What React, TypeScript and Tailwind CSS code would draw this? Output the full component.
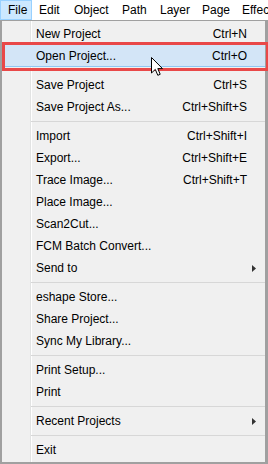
import React from 'react';

type Item = { label: string; shortcut?: string; submenu?: boolean; active?: boolean } | 'sep';

const items: Item[] = [
  { label: 'New Project', shortcut: 'Ctrl+N' },
  { label: 'Open Project...', shortcut: 'Ctrl+O', active: true },
  'sep',
  { label: 'Save Project', shortcut: 'Ctrl+S' },
  { label: 'Save Project As...', shortcut: 'Ctrl+Shift+S' },
  'sep',
  { label: 'Import', shortcut: 'Ctrl+Shift+I' },
  { label: 'Export...', shortcut: 'Ctrl+Shift+E' },
  { label: 'Trace Image...', shortcut: 'Ctrl+Shift+T' },
  { label: 'Place Image...' },
  { label: 'Scan2Cut...' },
  { label: 'FCM Batch Convert...' },
  { label: 'Send to', submenu: true },
  'sep',
  { label: 'eshape Store...' },
  { label: 'Share Project...' },
  { label: 'Sync My Library...' },
  'sep',
  { label: 'Print Setup...' },
  { label: 'Print' },
  'sep',
  { label: 'Recent Projects', submenu: true },
  'sep',
  { label: 'Exit' },
];

const bar = [
  { name: 'File', w: 'w-[32px]', on: true },
  { name: 'Edit', w: 'w-[35px]' },
  { name: 'Object', w: 'w-[48px]' },
  { name: 'Path', w: 'w-[38px]' },
  { name: 'Layer', w: 'w-[42px]' },
  { name: 'Page', w: 'w-[40px]' },
  { name: 'Effects', w: 'w-[60px]' },
];

const App: React.FC = () => {
  return (
    <div className="relative w-[268px] h-[464px] overflow-hidden bg-white font-['Liberation_Sans',Arial,sans-serif] text-[12px] text-black">
      {/* menu bar */}
      <div className="flex h-[20px] bg-white whitespace-nowrap">
        {bar.map(b => (
          <div
            key={b.name}
            className={`${b.w} shrink-0 h-[20px] flex items-center pl-[7px] ${b.on ? 'bg-[#cce8ff] border border-[#99d1ff] pl-[6px]' : ''}`}
          >
            {b.name}
          </div>
        ))}
      </div>

      {/* dropdown */}
      <div className="border-t border-t-[#a0a0a0] border-l-2 border-l-[#a0a0a0] border-r-[3px] border-r-[#a0a0a0] border-b-2 border-b-[#a0a0a0] bg-[linear-gradient(to_right,#f0f0f0_28px,#e2e3e3_28px,#e2e3e3_29px,#ffffff_29px,#ffffff_30px,#f0f0f0_30px)] pt-[2px] pb-px">
        {items.map((it, i) =>
          it === 'sep' ? (
            <div key={i} className="h-[7px] flex flex-col justify-center pl-[29px]">
              <div className="h-px bg-[#d7d7d7]" />
            </div>
          ) : (
            <div
              key={i}
              className={`h-[22px] flex items-center pl-[34px] whitespace-nowrap ${it.active ? 'bg-[#d3e5f7] border-b border-b-[#90c6f2]' : ''}`}
            >
              <span className="flex-1">{it.label}</span>
              {it.shortcut && <span>{it.shortcut}</span>}
              <span className="w-[18px] flex items-center pl-[5px]">
                {it.submenu && (
                  <svg width="4" height="7" viewBox="0 0 4 7">
                    <path d="M0 0 L4 3.5 L0 7 Z" fill="#333" />
                  </svg>
                )}
              </span>
            </div>
          )
        )}
      </div>

      {/* red annotation box */}
      <div className="absolute left-[2px] top-[42px] w-[267px] h-[29px] border-[3px] border-[#e94848]" />

      {/* mouse cursor */}
      <svg className="absolute left-[151px] top-[57px]" width="13" height="20" viewBox="0 0 13 20">
        <path d="M0.5 0.5 L0.5 16 L4.3 12.4 L6.8 18.3 L9.2 17.3 L6.8 11.6 L11.5 11.6 Z" fill="#fff" stroke="#000" strokeWidth="1" strokeLinejoin="miter" />
      </svg>
    </div>
  );
};

export default App;
